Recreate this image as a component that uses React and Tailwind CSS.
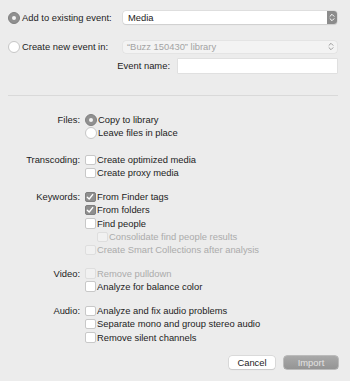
import React from 'react'

const font = { fontFamily: '"Liberation Sans", Arial, sans-serif' }

const Radio = ({ on }) => (
  <span
    className={`w-[12px] h-[12px] rounded-full shrink-0 flex items-center justify-center ${
      on ? 'bg-[#909090] border border-[#808080]' : 'bg-white border border-[#c6c6c6]'
    }`}
  >
    {on && <span className="w-[4px] h-[4px] rounded-full bg-[#f4f4f4]" />}
  </span>
)

const Box = ({ on, disabled }) => (
  <span
    className={`w-[10.5px] h-[10.5px] rounded-[2px] shrink-0 flex items-center justify-center ${
      on
        ? 'bg-[#8e8e8e] border border-[#7f7f7f]'
        : disabled
        ? 'bg-[#f1f1f1] border border-[#dedede]'
        : 'bg-white border border-[#c8c8c8]'
    }`}
  >
    {on && (
      <svg width="8" height="8" viewBox="0 0 8 8">
        <path d="M1.3 4.2 L3.2 6 L6.7 1.6" fill="none" stroke="#fff" strokeWidth="1.4" strokeLinecap="round" strokeLinejoin="round" />
      </svg>
    )}
  </span>
)

const Chevrons = ({ color }) => (
  <svg width="6" height="9" viewBox="0 0 6 9">
    <path d="M1 3.3 L3 1.3 L5 3.3 M1 5.7 L3 7.7 L5 5.7" fill="none" stroke={color} strokeWidth="1" strokeLinecap="round" strokeLinejoin="round" />
  </svg>
)

// one option line inside a group
const Row = ({ kind = 'box', on, disabled, indent, children }) => (
  <div className={`h-[13.33px] flex items-center ${indent ? 'pl-[12px]' : ''}`}>
    {kind === 'radio' ? <Radio on={on} /> : <Box on={on} disabled={disabled} />}
    <span className={`${kind === 'radio' ? 'ml-[1px]' : 'ml-[1.5px]'} ${disabled ? 'text-[#ababab]' : 'text-[#1c1c1c]'} whitespace-nowrap`}>
      {children}
    </span>
  </div>
)

const Group = ({ label, className = '', children }) => (
  <div className={`flex ${className}`}>
    <div className="w-[81px] pr-[1px] h-[13.33px] flex items-center justify-end text-[#1c1c1c]">{label}</div>
    <div className="pl-[4px] flex flex-col">{children}</div>
  </div>
)

export default function App() {
  return (
    <div className="w-[350px] h-[381px] bg-[#ececec] text-[9.4px] leading-none overflow-hidden" style={font}>
      {/* event target */}
      <div className="pt-[11px] pl-[8px] pr-[13px]">
        <div className="h-[13px] flex items-center">
          <Radio on />
          <span className="ml-[2px] w-[101px] text-[#1c1c1c]">Add to existing event:</span>
          <div className="flex-1 h-[13px] bg-white rounded-[3px] shadow-[0_0_0_0.5px_#cfcfcf,0_1px_1px_rgba(0,0,0,0.12)] flex items-center">
            <span className="pl-[5px] flex-1 text-[#1c1c1c]">Media</span>
            <span className="w-[10px] h-[13px] bg-[#8c8c8c] rounded-r-[3px] flex items-center justify-center">
              <Chevrons color="#ffffff" />
            </span>
          </div>
        </div>
        <div className="h-[13px] mt-[16px] flex items-center">
          <Radio />
          <span className="ml-[2px] w-[101px] text-[#1c1c1c]">Create new event in:</span>
          <div className="flex-1 h-[12px] bg-[#f3f3f3] rounded-[3px] shadow-[0_0_0_0.5px_#dcdcdc] flex items-center">
            <span className="pl-[4px] flex-1 text-[#a3a3a3]">“Buzz 150430” library</span>
            <span className="pr-[3px] flex items-center">
              <Chevrons color="#9a9a9a" />
            </span>
          </div>
        </div>
        <div className="h-[14px] mt-[6px] flex items-center">
          <span className="w-[170px] pr-[8px] text-right text-[#1c1c1c]">Event name:</span>
          <div className="flex-1 h-[14px] bg-white shadow-[0_0_0_0.5px_#d4d4d4]" />
        </div>
      </div>

      <div className="mt-[22px] mx-[8px] mr-[12px] h-[1px] bg-[#d9d9d9]" />

      {/* import options */}
      <Group label="Files:" className="mt-[17px]">
        <Row kind="radio" on>Copy to library</Row>
        <Row kind="radio">Leave files in place</Row>
      </Group>
      <Group label="Transcoding:" className="mt-[13.5px]">
        <Row>Create optimized media</Row>
        <Row>Create proxy media</Row>
      </Group>
      <Group label="Keywords:" className="mt-[10.3px]">
        <Row on>From Finder tags</Row>
        <Row on>From folders</Row>
        <Row>Find people</Row>
        <Row disabled indent>Consolidate find people results</Row>
        <Row disabled>Create Smart Collections after analysis</Row>
      </Group>
      <Group label="Video:" className="mt-[10px]">
        <Row disabled>Remove pulldown</Row>
        <Row>Analyze for balance color</Row>
      </Group>
      <Group label="Audio:" className="mt-[10.7px]">
        <Row>Analyze and fix audio problems</Row>
        <Row>Separate mono and group stereo audio</Row>
        <Row>Remove silent channels</Row>
      </Group>

      {/* buttons */}
      <div className="mt-[12px] pr-[12px] flex justify-end gap-[9px]">
        <button className="w-[46px] h-[13px] bg-white rounded-[3px] shadow-[0_0_0_0.5px_#c8c8c8,0_1px_1px_rgba(0,0,0,0.12)] text-[#1c1c1c] flex items-center justify-center">
          Cancel
        </button>
        <button className="w-[54px] h-[13px] rounded-[3px] bg-[linear-gradient(#a9a9a9,#949494)] shadow-[0_0_0_0.5px_#8a8a8a] text-[#e3e3e3] flex items-center justify-center">
          Import
        </button>
      </div>
    </div>
  )
}
